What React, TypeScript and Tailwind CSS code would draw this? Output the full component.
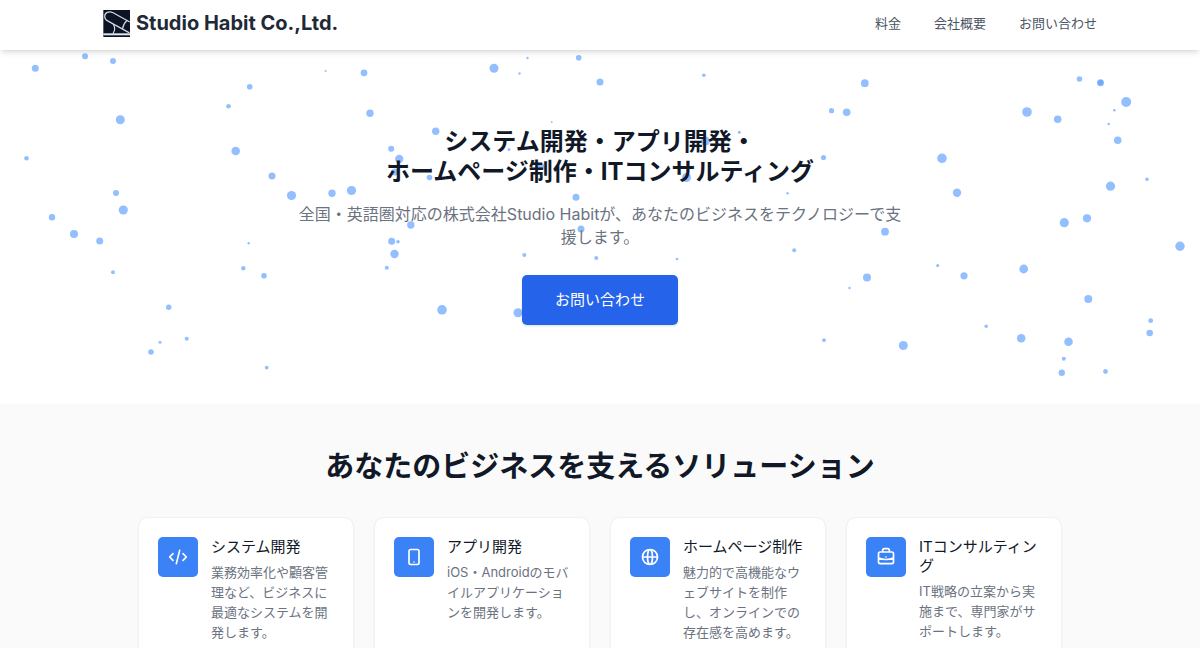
import type { ReactNode } from "react";

type Dot = [x: number, y: number, r: number];

const dots: Dot[] = [
  [35.3, 18.3, 3.5], [85, 6.3, 3], [113, 11, 3], [249.7, 36.7, 2.8], [228.5, 56.3, 2.3],
  [120.3, 69.7, 4.5], [26.5, 108.3, 2.3], [235.7, 101, 4.3], [272, 126, 3.5], [291.5, 145.5, 4.6],
  [116, 143, 3], [123.3, 160, 4.6], [52, 167.3, 3.2], [74, 184, 4], [99.7, 191, 3.5],
  [113, 222.3, 2], [248.7, 193.3, 1.2], [243.3, 218.2, 2.2], [264, 225.8, 2.8], [168.7, 257.3, 2.7],
  [160, 292.3, 1.5], [186.7, 288.7, 2], [151, 302, 2.8], [266.7, 317.6, 1.9], [325.7, 21, 1],
  [364, 22.8, 3.4], [494, 18.3, 4.5], [527.5, 8, 1.2], [519.5, 23.5, 1.2], [578.7, 7.7, 2.8],
  [600, 32, 3.5], [370, 63.3, 3.7], [435.7, 81.3, 3.7], [391.2, 98.7, 3], [399.2, 109, 4.2],
  [551.7, 72, 0.9], [509, 99.5, 1.5], [395, 122, 3.5], [429.5, 127.5, 2.8], [332, 143.2, 3.7],
  [351.5, 140.5, 4.6], [576, 147.3, 3.5], [541, 116, 3], [410.8, 175, 3.7], [391.7, 191.2, 3.5],
  [398, 191.8, 1.8], [394.5, 204, 4.2], [386.8, 217.7, 2], [524.3, 205, 2], [581, 179, 3.5],
  [596.3, 208, 2], [442, 259.8, 4.8], [518, 262.7, 4.5], [703.8, 25.3, 1.8], [864.8, 33.2, 3.9],
  [831.5, 60.7, 2.6], [846.7, 62.3, 3.8], [823.5, 107.5, 2.6], [739.3, 82.3, 1.5], [705.5, 91, 4.5],
  [686.5, 127.5, 4.5], [787.5, 143.3, 1.2], [885, 181.7, 3.9], [794.2, 200.3, 2], [677, 209, 1.3],
  [867, 227.5, 4], [849.5, 238, 1.2], [824, 290.2, 1.9], [903.3, 295.5, 4.5], [1079.5, 29, 2.8],
  [1100.5, 32.7, 3.5], [1100.5, 32.5, 2.8], [1126.2, 52, 5], [1114.3, 60.3, 1.3], [1108.7, 74, 1.3],
  [1027, 62, 4.8], [1057.7, 69.3, 3.8], [1117.7, 90.3, 3.8], [942, 108.3, 4.8], [957, 142.7, 4.2],
  [1110.5, 136.2, 4.6], [1147, 129.3, 1.8], [1064.3, 172.7, 4.6], [1087, 168.3, 4.1], [1180, 196.3, 4.7],
  [937.7, 215.6, 1.6], [964, 225.8, 3.6], [1023.7, 219, 4.4], [1088.3, 249, 4], [1150.7, 270.7, 2.4],
  [1149.7, 283, 3.3], [986.2, 276.3, 1.8], [1021.2, 288.3, 4.3], [1068.5, 291.7, 4.3],
  [1063.8, 308.7, 2], [1061.8, 322.8, 3.2], [1105.5, 321.5, 2.4],
];

const services = [
  {
    title: "システム開発",
    text: "業務効率化や顧客管理など、ビジネスに最適なシステムを開発します。",
    icon: "M10 20l4-16m4 4l4 4-4 4M6 16l-4-4 4-4",
  },
  {
    title: "アプリ開発",
    text: "iOS・Androidのモバイルアプリケーションを開発します。",
    icon: "M12 18h.01M8 21h8a2 2 0 002-2V5a2 2 0 00-2-2H8a2 2 0 00-2 2v14a2 2 0 002 2z",
  },
  {
    title: "ホームページ制作",
    text: "魅力的で高機能なウェブサイトを制作し、オンラインでの存在感を高めます。",
    icon: "M21 12a9 9 0 01-9 9m9-9a9 9 0 00-9-9m9 9H3m9 9a9 9 0 01-9-9m9 9c1.657 0 3-4.03 3-9s-1.343-9-3-9m0 18c-1.657 0-3-4.03-3-9s1.343-9 3-9m-9 9a9 9 0 019-9",
  },
  {
    title: "ITコンサルティング",
    text: "IT戦略の立案から実施まで、専門家がサポートします。",
    icon: "M21 13.255A23.931 23.931 0 0112 15c-3.183 0-6.22-.62-9-1.745M16 6V4a2 2 0 00-2-2h-4a2 2 0 00-2 2v2m4 6h.01M5 20h14a2 2 0 002-2V8a2 2 0 00-2-2H5a2 2 0 00-2 2v10a2 2 0 002 2z",
  },
];

function Logo() {
  return (
    <svg viewBox="0 0 80 80" className="size-[27px] shrink-0" aria-hidden="true">
      <rect x="1" width="79" height="80" fill="#0b1324" />
      <g fill="none" stroke="#d5dae3" strokeWidth="3.5" strokeLinecap="round">
        <path d="M78 35 30 8C17 2 5 8 5 19c0 7 4 11 10 14l62 34" />
        <path d="M71 31c-6 5-11 12-13 24" />
        <path d="M31 43c5 9 5 17-1 26" />
      </g>
      <path d="M1 69h79v6H1z" fill="#dfe3ea" />
    </svg>
  );
}

function NavLink({ href, children }: { href: string; children: ReactNode }) {
  return (
    <a href={href} className="text-[13px] leading-5 text-[#4b5563] hover:text-[#111827]">
      {children}
    </a>
  );
}

export default function App() {
  return (
    <div lang="ja" className="min-h-screen bg-white font-['Inter','Noto_Sans_CJK_JP',sans-serif] text-[#111827]">
      <header className="relative z-10 bg-white shadow-md">
        <div className="mx-auto flex max-w-[1042px] items-center justify-between px-6 pt-[9px] pb-[13px]">
          <a href="#top" className="flex items-center gap-1.5 text-xl font-bold text-[#1f2937]">
            <Logo />
            Studio Habit Co.,Ltd.
          </a>
          <nav className="flex items-center gap-[33px]">
            <NavLink href="#pricing">料金</NavLink>
            <NavLink href="#company">会社概要</NavLink>
            <NavLink href="#contact">お問い合わせ</NavLink>
          </nav>
        </div>
      </header>

      <main id="top">
        <section className="relative px-6 pt-[77px] pb-[79px] text-center">
          <svg
            viewBox="0 0 1200 354"
            preserveAspectRatio="xMidYMin slice"
            className="absolute inset-0 size-full"
            aria-hidden="true"
          >
            {dots.map(([x, y, r], i) => (
              <circle key={i} cx={x} cy={y} r={r} fill="#60a0ff" fillOpacity="0.68" />
            ))}
          </svg>
          <div className="relative">
            <h1 className="text-2xl leading-[30px] font-bold">
              システム開発・アプリ開発・
              <br />
              ホームページ制作・ITコンサルティング
            </h1>
            <p className="mx-auto mt-4 max-w-[616px] text-base leading-[23px] text-[#6b7280]">
              全国・英語圏対応の株式会社Studio Habitが、あなたのビジネスをテクノロジーで支援します。
            </p>
            <a
              href="#contact"
              className="mt-[26px] inline-flex h-[50px] items-center rounded-[5px] bg-[#2563eb] px-[33px] text-[15px] text-white shadow-sm"
            >
              お問い合わせ
            </a>
          </div>
        </section>

        <section className="bg-[#fafafa] px-6 pt-[41px] pb-16">
          <h2 className="text-center text-[29px] leading-[44px] font-bold">
            あなたのビジネスを支えるソリューション
          </h2>
          <div className="mx-auto mt-7 grid max-w-[924px] grid-cols-2 gap-5 md:grid-cols-4">
            {services.map((s) => (
              <article
                key={s.title}
                className="flex items-start gap-[13px] rounded-[10px] border border-[#f0f1f3] bg-white p-[19px] shadow-xs"
              >
                <span className="flex size-10 shrink-0 items-center justify-center rounded-[5px] bg-[#3b82f6] text-white">
                  <svg
                    viewBox="0 0 24 24"
                    className="size-5"
                    fill="none"
                    stroke="currentColor"
                    strokeWidth="2"
                    strokeLinecap="round"
                    strokeLinejoin="round"
                    aria-hidden="true"
                  >
                    <path d={s.icon} />
                  </svg>
                </span>
                <div className="min-w-0 flex-1">
                  <h3 className="text-[15px] leading-[19px]">{s.title}</h3>
                  <p className="mt-1.5 text-[13px] leading-5 text-[#6b7280]">{s.text}</p>
                </div>
              </article>
            ))}
          </div>
        </section>
      </main>
    </div>
  );
}
